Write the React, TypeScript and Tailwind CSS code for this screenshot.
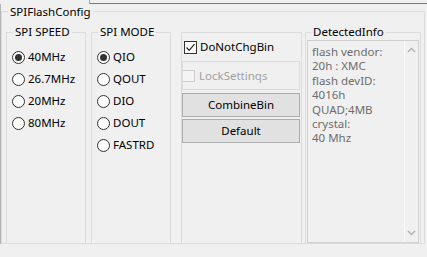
import React from "react";

function Radio({ label, checked }: { label: string; checked?: boolean }) {
  return (
    <div className="flex items-center h-[22px]">
      <span className="w-[13px] h-[13px] rounded-full border border-[#333333] bg-white flex items-center justify-center shrink-0">
        {checked && <span className="w-[7px] h-[7px] rounded-full bg-[#333333]" />}
      </span>
      <span className="ml-[3px] text-black whitespace-nowrap">{label}</span>
    </div>
  );
}

function Chevron({ up }: { up?: boolean }) {
  return (
    <svg width="9" height="6" viewBox="0 0 9 6">
      <polyline
        points={up ? "1,5 4.5,1.5 8,5" : "1,1 4.5,4.5 8,1"}
        fill="none"
        stroke="#b0b0b0"
        strokeWidth="1.4"
      />
    </svg>
  );
}

export default function App() {
  const info = ["flash vendor:", "20h : XMC", "flash devID:", "4016h", "QUAD;4MB", "crystal:", "40 Mhz"];
  return (
    <div
      className="w-[427px] h-[257px] bg-[#f0f0f0] overflow-hidden flex flex-col text-[11.5px] leading-[16px] text-black"
      style={{ fontFamily: '"Noto Sans", "Open Sans", sans-serif' }}
    >
      <div className="flex h-[4px] shrink-0">
        <div className="w-[90px] border-r border-[#a0a0a0]" />
        <div className="flex-1 border-b border-[#7a7a7a]" />
      </div>
      <div className="flex border-l border-[#b4b4b4]">
        <fieldset className="w-[424px] border border-[#dcdcdc]">
          <legend className="ml-[6px] px-[2px] leading-[15px]">SPIFlashConfig</legend>
          <div className="flex h-[219px] mt-[5px] pl-[4px]">
            <fieldset className="w-[80px] h-full border border-b-0 border-[#dcdcdc]">
              <legend className="ml-[6px] px-[2px] leading-[16px]">SPI SPEED</legend>
              <div className="pl-[5px] mt-[6px] flex flex-col">
                <Radio label="40MHz" checked />
                <Radio label="26.7MHz" />
                <Radio label="20MHz" />
                <Radio label="80MHz" />
              </div>
            </fieldset>
            <fieldset className="w-[80px] h-full ml-[5px] border border-b-0 border-[#dcdcdc]">
              <legend className="ml-[6px] px-[2px] leading-[16px]">SPI MODE</legend>
              <div className="pl-[5px] mt-[6px] flex flex-col">
                <Radio label="QIO" checked />
                <Radio label="QOUT" />
                <Radio label="DIO" />
                <Radio label="DOUT" />
                <Radio label="FASTRD" />
              </div>
            </fieldset>
            <div className="w-[121px] mt-[8px] ml-[10px] border border-b-0 border-[#dcdcdc] flex flex-col">
              <div className="flex items-center h-[16px] mt-[6px] ml-[2px]">
                <span className="w-[13px] h-[13px] border border-[#333333] bg-white flex items-center justify-center shrink-0">
                  <svg width="11" height="11" viewBox="0 0 11 11">
                    <polyline points="1.5,5.5 4.2,8.3 9.5,2.2" fill="none" stroke="#222222" strokeWidth="1.2" />
                  </svg>
                </span>
                <span className="ml-[3px] whitespace-nowrap">DoNotChgBin</span>
              </div>
              <div className="w-[118px] h-[29px] mt-[6px] border border-[#dcdcdc] flex items-center">
                <span className="w-[12px] h-[12px] border border-[#cccccc] border-l-0 bg-[#f4f4f4] shrink-0" />
                <span className="ml-[4px] text-[#a0a0a0] whitespace-nowrap">LockSettinqs</span>
              </div>
              <button className="w-[118px] h-[24px] mt-[3px] bg-[#e1e1e1] border border-[#adadad] flex items-center justify-center leading-[16px]">
                CombineBin
              </button>
              <button className="w-[118px] h-[24px] mt-[2px] bg-[#e1e1e1] border border-[#adadad] flex items-center justify-center leading-[16px]">
                Default
              </button>
            </div>
            <fieldset className="w-[116px] h-full ml-[3px] border border-b-0 border-[#dcdcdc]">
              <legend className="ml-[5px] px-[2px] leading-[16px]">DetectedInfo</legend>
              <div className="w-[112px] h-[203px] ml-[1px] border border-[#d0d0d0] flex">
                <div className="flex-1 pl-[4px] pt-[4px] text-[#6d6d6d] leading-[14.4px]">
                  {info.map((l) => (
                    <div key={l} className="whitespace-nowrap">{l}</div>
                  ))}
                </div>
                <div className="w-[14px] border-l border-[#fafafa] flex flex-col items-center justify-between py-[6px]">
                  <Chevron up />
                  <Chevron />
                </div>
              </div>
            </fieldset>
          </div>
        </fieldset>
      </div>
    </div>
  );
}
